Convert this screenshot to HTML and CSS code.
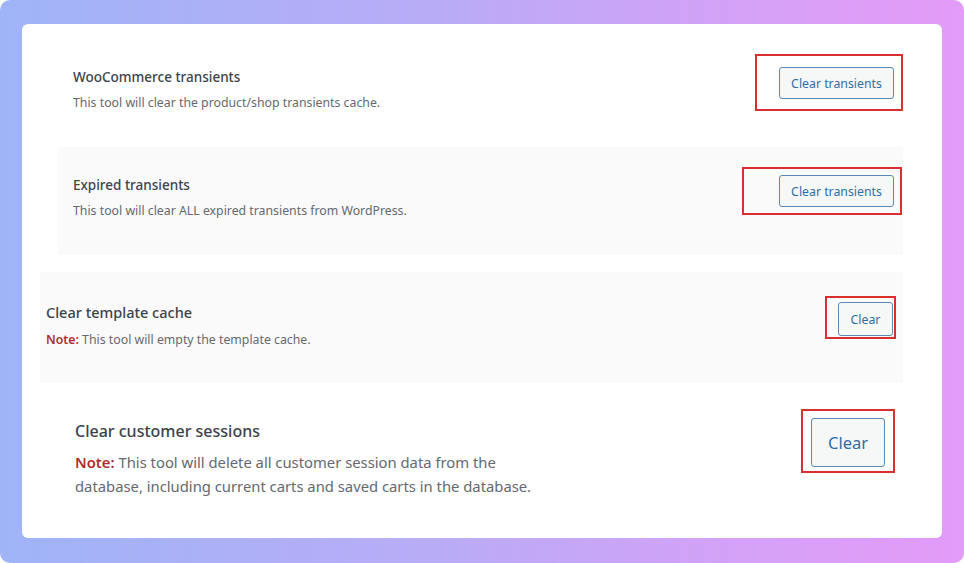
FILE: index.html
```html
<!DOCTYPE HTML>
<html>

<head>
	<meta charset="UTF-8">
	<title>Tools</title>

	<link rel="stylesheet" href="styles.css">

</head>

<body>
  <div class="frame">
    <div class="card">

      <div class="row row-woo">
        <div class="info">
          <div class="title">WooCommerce transients</div>
          <div class="desc">This tool will clear the product/shop transients cache.</div>
        </div>
        <div class="mark">
          <button class="btn">Clear transients</button>
        </div>
      </div>

      <div class="row row-expired">
        <div class="info">
          <div class="title">Expired transients</div>
          <div class="desc">This tool will clear ALL expired transients from WordPress.</div>
        </div>
        <div class="mark">
          <button class="btn">Clear transients</button>
        </div>
      </div>

      <div class="row row-template">
        <div class="info">
          <div class="title">Clear template cache</div>
          <div class="desc"><strong class="note">Note:</strong> This tool will empty the template cache.</div>
        </div>
        <div class="mark">
          <button class="btn">Clear</button>
        </div>
      </div>

      <div class="row row-sessions">
        <div class="info">
          <div class="title">Clear customer sessions</div>
          <div class="desc"><strong class="note">Note:</strong> This tool will delete all customer session data from the database, including current carts and saved carts in the database.</div>
        </div>
        <div class="mark">
          <button class="btn">Clear</button>
        </div>
      </div>

    </div>
  </div>
</body>

</html>
```

FILE: styles.css
```css
html, body {
  margin: 0;
  padding: 0;
  background: #fff;
}

body {
  font-family: "Noto Sans", "Open Sans", sans-serif;
  color: #3c434a;
}

.frame {
  width: 964px;
  height: 563px;
  box-sizing: border-box;
  padding: 24px 22px 25px 22px;
  border-radius: 10px;
  background: linear-gradient(90deg, #9fb4f7 0%, #b9acf7 45%, #d7a0f7 80%, #e39bf8 100%);
}

.card {
  height: 514px;
  background: #fff;
  border-radius: 6px;
  overflow: hidden;
}

.row {
  display: flex;
  justify-content: space-between;
  align-items: flex-start;
  box-sizing: border-box;
}

.title {
  font-size: 13.5px;
  line-height: 20px;
  font-weight: 500;
  color: #3c434a;
}

.desc {
  font-size: 12.3px;
  line-height: 20px;
  margin-top: 6px;
  color: #646970;
}

.note {
  color: #b32d2e;
  font-weight: 600;
}

.mark {
  border: 2px solid #d9302f;
  box-sizing: border-box;
  display: flex;
}

.btn {
  font-family: inherit;
  font-size: 12.3px;
  color: #2f6ea5;
  background: #f6f7f7;
  border: 1px solid #5a8ab2;
  border-radius: 3px;
  height: 32px;
  padding: 0;
  white-space: nowrap;
  cursor: pointer;
}

/* row 1 */
.row-woo {
  margin: 16px 39px 0 36px;
  height: 100px;
}
.row-woo .info {
  margin-top: 27px;
  padding-left: 15px;
}
.row-woo .mark {
  margin-top: 14px;
  width: 148px;
  height: 57px;
  padding: 11px 7px 0 22px;
}
.row-woo .btn {
  width: 115px;
}

/* row 2 */
.row-expired {
  margin: 7px 39px 0 36px;
  height: 108px;
  background: #fafafa;
}
.row-expired .info {
  margin-top: 28px;
  padding-left: 15px;
}
.row-expired .mark {
  margin: 20px 1px 0 0;
  width: 160px;
  height: 48px;
  padding: 6px 6px 0 35px;
}
.row-expired .btn {
  width: 115px;
}

/* row 3 */
.row-template {
  margin: 17px 39px 0 18px;
  height: 111px;
  background: #fafafa;
}
.row-template .info {
  margin-top: 29px;
  padding-left: 6px;
}
.row-template .title {
  font-size: 14.5px;
  line-height: 22px;
}
.row-template .desc {
  margin-top: 7px;
}
.row-template .mark {
  margin: 24px 7px 0 0;
  width: 71px;
  height: 43px;
  padding: 4px 1px 0 11px;
}
.row-template .btn {
  width: 55px;
  height: 34px;
}

/* row 4 */
.row-sessions {
  margin: 26px 39px 0 36px;
}
.row-sessions .info {
  margin-top: 10px;
  padding-left: 17px;
  width: 480px;
}
.row-sessions .title {
  font-size: 16px;
  line-height: 24px;
}
.row-sessions .desc {
  font-size: 14.8px;
  line-height: 24px;
  margin-top: 7px;
  width: 465px;
}
.row-sessions .mark {
  margin: 0 8px 0 0;
  width: 94px;
  height: 64px;
  padding: 7px 8px 0 8px;
}
.row-sessions .btn {
  width: 74px;
  height: 49px;
  font-size: 16.5px;
}
```
